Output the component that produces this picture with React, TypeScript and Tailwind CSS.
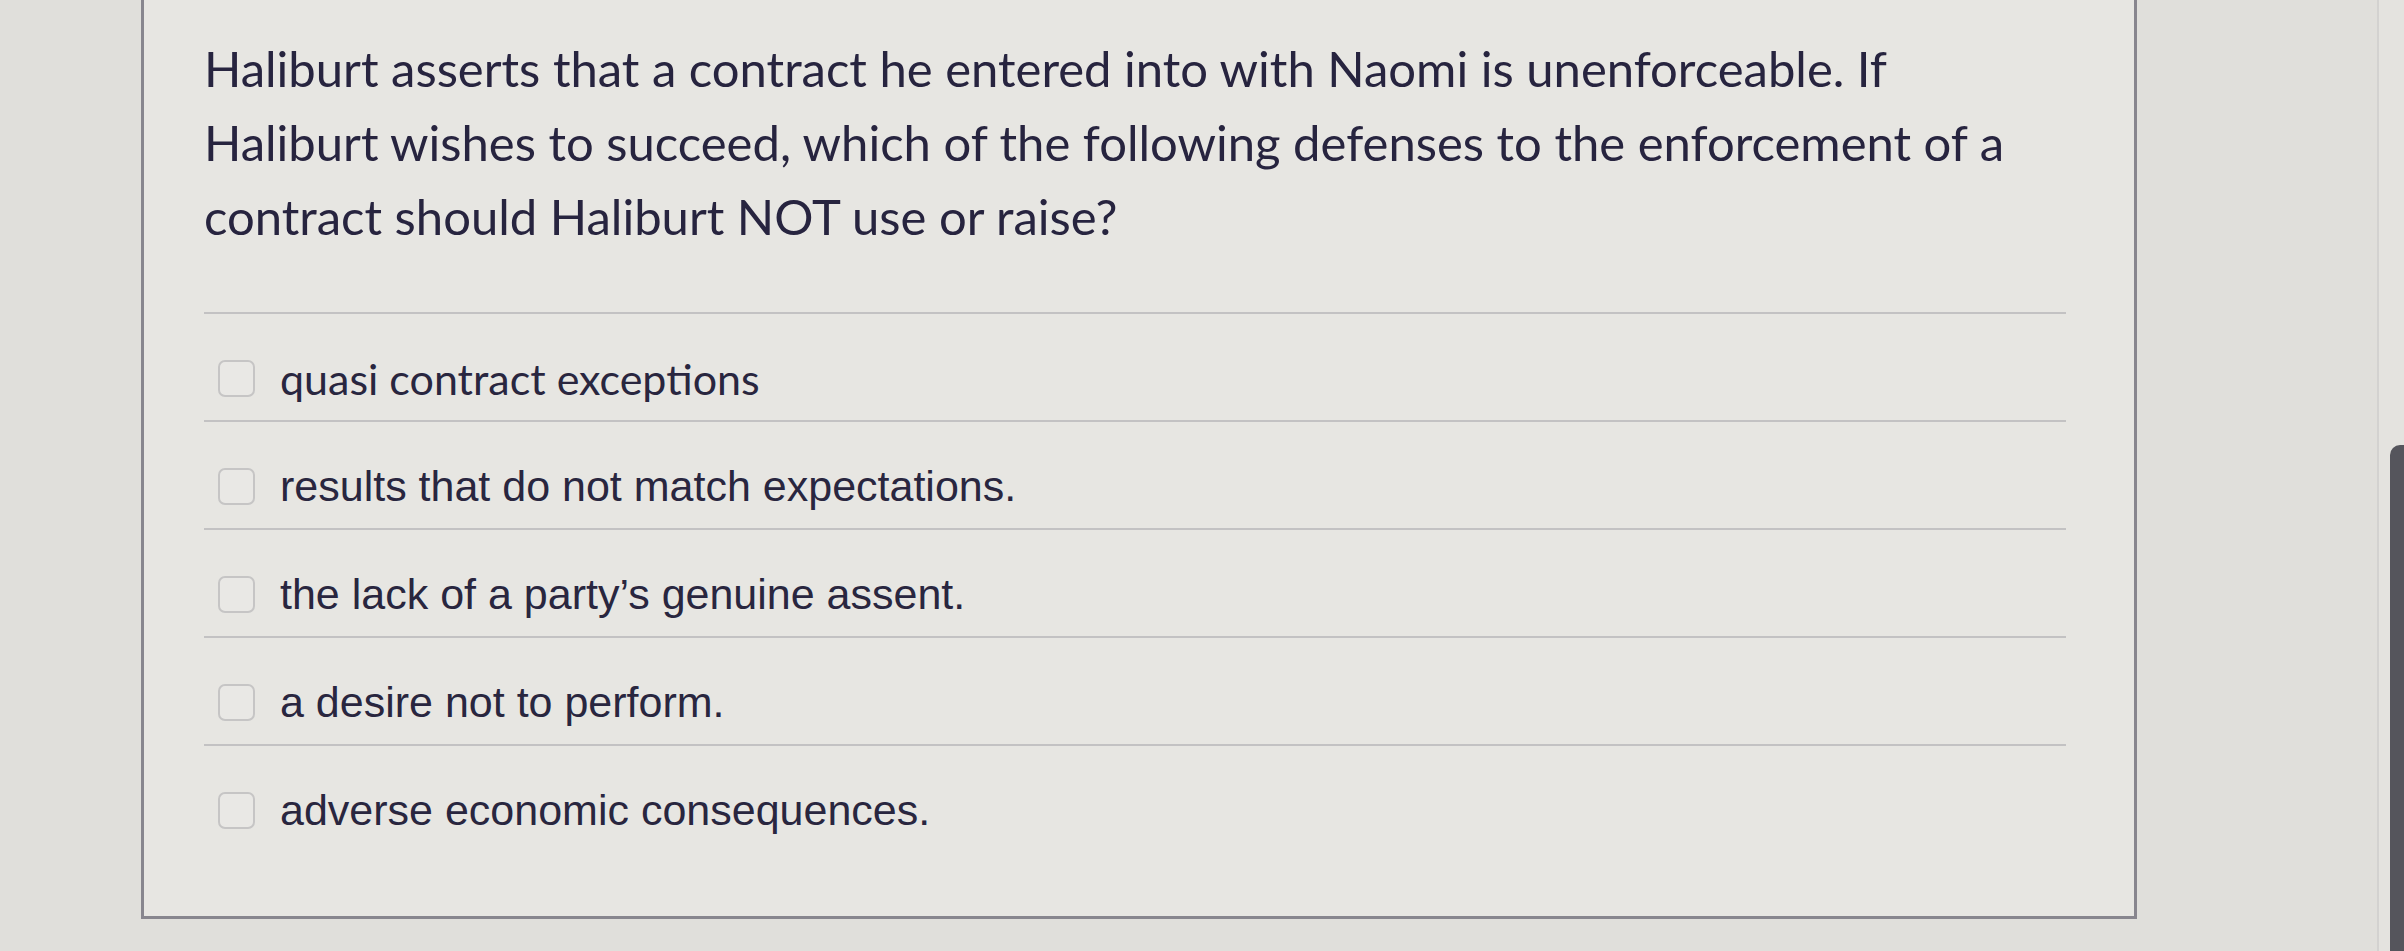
import React from 'react';

const options = [
  { text: 'quasi contract exceptions', font: "font-['Lato',sans-serif] text-[43px]" },
  { text: 'results that do not match expectations.', font: "font-['Liberation_Sans',Arial,sans-serif] text-[43px]" },
  { text: 'the lack of a party\u2019s genuine assent.', font: "font-['Liberation_Sans',Arial,sans-serif] text-[43px]" },
  { text: 'a desire not to perform.', font: "font-['Liberation_Sans',Arial,sans-serif] text-[43px]" },
  { text: 'adverse economic consequences.', font: "font-['Liberation_Sans',Arial,sans-serif] text-[43px]" },
];

export default function App() {
  return (
    <div className="flex h-[951px] w-full overflow-hidden bg-[#e0dfdb]">
      <div className="w-[141px] shrink-0" />

      <div className="flex w-[1996px] shrink-0 flex-col self-start border-x-[3px] border-b-[3px] border-[#88868e] bg-[#e7e6e2] pr-[68px] pb-[64px] pl-[60px]">
        <p className="pt-[31px] font-['Lato',sans-serif] text-[49px] leading-[74px] text-[#27243f]">
          Haliburt asserts that a contract he entered into with Naomi is unenforceable. If
          <br />
          Haliburt wishes to succeed, which of the following defenses to the enforcement of a
          <br />
          contract should Haliburt NOT use or raise?
        </p>

        <div className="mt-[59px] flex flex-col">
          {options.map((o) => (
            <label
              key={o.text}
              className="flex items-center gap-[25px] border-t-2 border-[#c3c2c3] pt-[46px] pb-[23px] pl-[14px]"
            >
              <span className="h-[37px] w-[37px] shrink-0 rounded-[7px] border-2 border-[#c6c5c5] bg-[#e9e8e5]" />
              <span className={`${o.font} leading-[37px] text-[#29263f]`}>{o.text}</span>
            </label>
          ))}
        </div>
      </div>

      <div className="flex-1" />

      <div className="flex w-[27px] shrink-0 justify-end border-l-2 border-[#d3d2d0] bg-[#e4e3df]">
        <div className="mt-[445px] w-[14px] rounded-tl-[10px] bg-[#55555c]" />
      </div>
    </div>
  );
}
